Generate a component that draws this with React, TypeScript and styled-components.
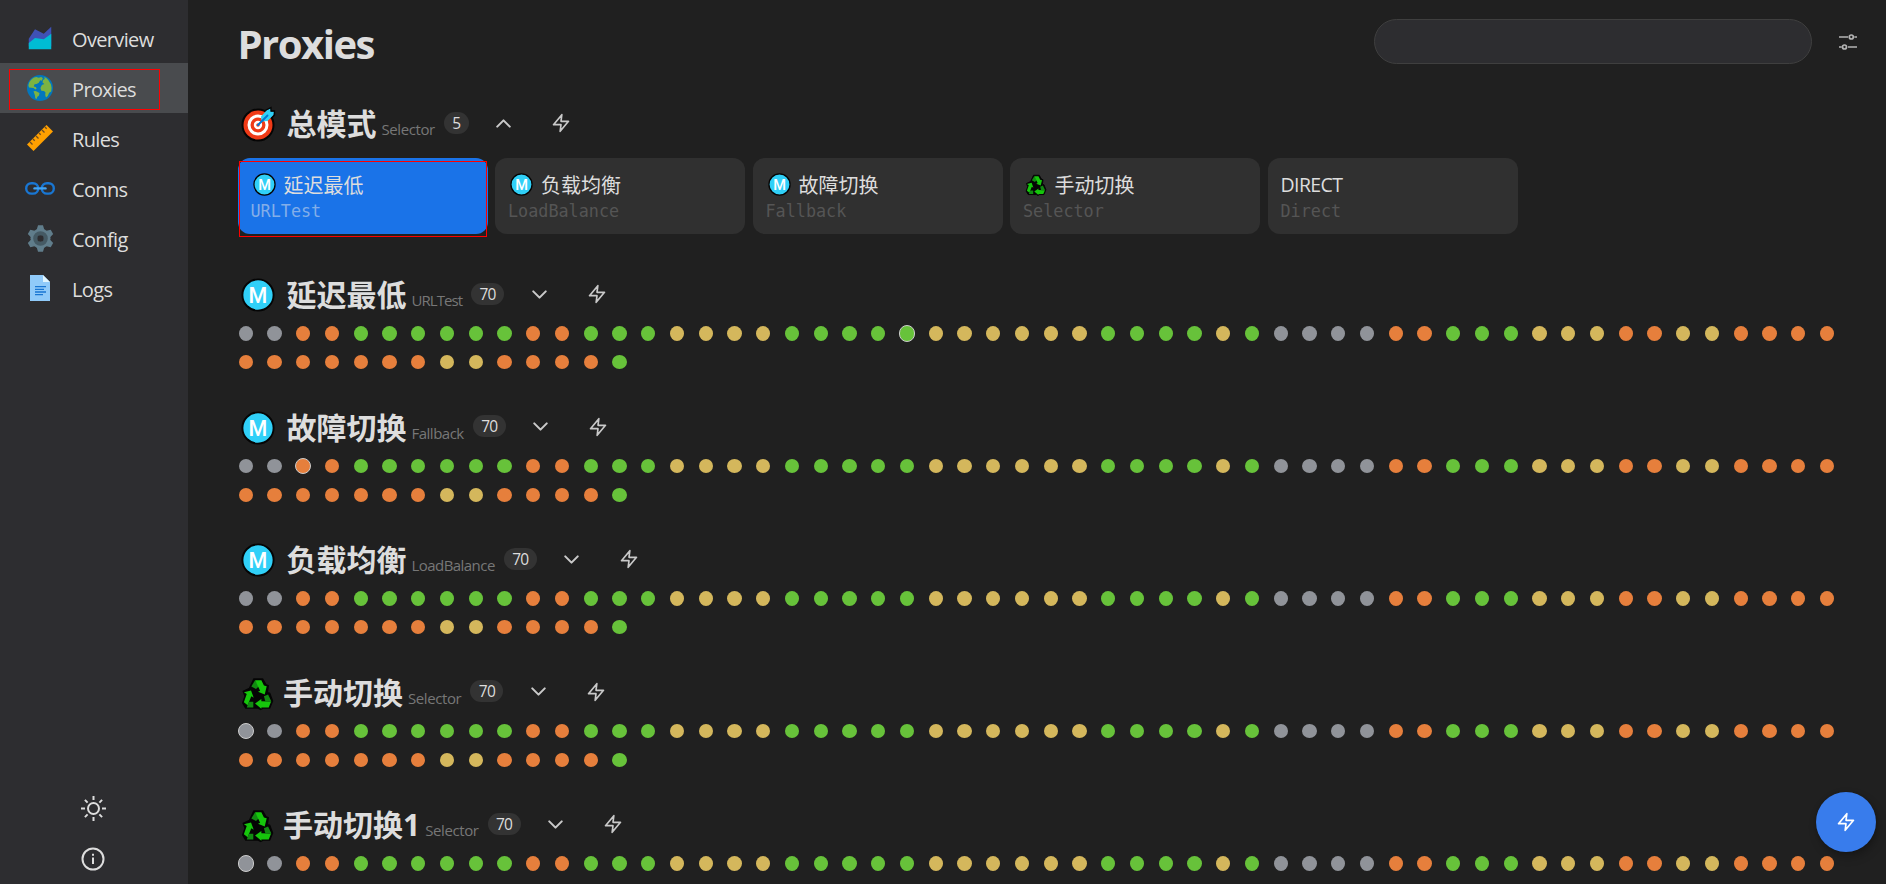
import React from 'react';
import styled, { createGlobalStyle, css } from 'styled-components';

const GlobalStyle = createGlobalStyle`
  * { box-sizing: border-box; }
  html, body { margin: 0; padding: 0; height: 100%; background: #202020; overflow: hidden; }
  body { font-family: "Open Sans", "Noto Sans CJK SC", sans-serif; color: #ddd; }
  svg { display: block; flex: none; overflow: visible; }
`;

const Layout = styled.div`
  display: flex;
  height: 884px;
  overflow: hidden;
`;

const Sidebar = styled.nav`
  width: 187.5px;
  flex: none;
  display: flex;
  flex-direction: column;
  justify-content: space-between;
  background: #2d2d30;
  padding: 13px 0 0;
`;

const NavItem = styled.div<{ $active?: boolean }>`
  position: relative;
  display: flex;
  align-items: center;
  height: 50px;
  padding-left: 25px;
  background: ${(p) => (p.$active ? '#494b4e' : 'transparent')};
`;

const NavIcon = styled.div`
  width: 30px;
  display: flex;
  justify-content: center;
`;

const NavLabel = styled.span`
  margin-left: 17px;
  font-size: 20px;
  line-height: 28px;
  letter-spacing: -0.65px;
  padding-top: 3px;
`;

const Marker = styled.div<{ $top: number; $left: number; $width: number; $height: number }>`
  position: absolute;
  top: ${(p) => p.$top}px;
  left: ${(p) => p.$left}px;
  width: ${(p) => p.$width}px;
  height: ${(p) => p.$height}px;
  border: 1px solid #f00;
  pointer-events: none;
`;

const SideFooter = styled.div`
  display: flex;
  flex-direction: column;
  align-items: center;
  padding: 0 1px 0.5px 0;
`;

const FooterButton = styled.div`
  height: 50px;
  display: flex;
  align-items: center;
`;

const Main = styled.main`
  flex: 1;
  min-width: 0;
  padding-left: 50px;
`;

const TopBar = styled.header`
  display: flex;
  align-items: center;
  justify-content: space-between;
  height: 84px;
  padding-right: 28px;
`;

const PageTitle = styled.h1`
  margin: 3px 0 0;
  font-size: 40px;
  line-height: 50px;
  font-weight: 700;
  letter-spacing: -1.5px;
`;

const TopRight = styled.div`
  display: flex;
  align-items: center;
  gap: 26px;
`;

const SearchInput = styled.input`
  width: 438px;
  height: 45px;
  margin-top: -1.5px;
  border: 1px solid #3f3f3f;
  border-radius: 23px;
  background: #2d2d30;
  color: #ddd;
  outline: none;
  padding: 0 18px;
`;

const Group = styled.section<{ $open?: boolean }>`
  padding-top: ${(p) => (p.$open ? 20 : 0)}px;
  margin-bottom: ${(p) => (p.$open ? 41.25 : 37.5)}px;
`;

const GroupHeader = styled.div`
  display: flex;
  align-items: center;
  height: 40px;
`;

const GroupIcon = styled.div<{ $gap: number }>`
  width: 34px;
  margin-left: 3px;
  margin-right: ${(p) => p.$gap}px;
`;

const GroupName = styled.h2`
  margin: 0;
  font-size: 30px;
  line-height: 40px;
  font-weight: 700;
  white-space: nowrap;
`;

const GroupType = styled.span<{ $tracking: number }>`
  margin-left: 5px;
  padding-top: 10px;
  font-size: 15px;
  line-height: 20px;
  letter-spacing: ${(p) => p.$tracking}px;
  color: #777;
`;

const Count = styled.span`
  margin: -3px 0 0 9px;
  height: 22px;
  padding: 0 8.4px;
  border-radius: 11px;
  background: #333;
  font-size: 15.5px;
  line-height: 22px;
  letter-spacing: -0.7px;
`;

const HeaderButton = styled.span<{ $gap: number }>`
  margin: -2px 0 0 ${(p) => p.$gap}px;
  color: #c9c9c9;
`;

const Cards = styled.div`
  position: relative;
  display: flex;
  gap: 7.5px;
  margin-top: 14px;
`;

const Card = styled.div<{ $now?: boolean }>`
  width: 250px;
  height: 76px;
  border-radius: 12px;
  padding: 14px 13px 0;
  background: ${(p) => (p.$now ? '#1a73e8' : '#303030')};
`;

const CardName = styled.div`
  display: flex;
  align-items: center;
  height: 25px;
  font-size: 20px;
  white-space: nowrap;
`;

const CardIcon = styled.div`
  margin: 0 8px 0 2px;
`;

const LatinName = styled.span`
  font-size: 19.5px;
  letter-spacing: -0.6px;
`;

const CardType = styled.div<{ $now?: boolean }>`
  font-family: "DejaVu Sans Mono", monospace;
  font-size: 16.8px;
  line-height: 28px;
  ${(p) => (p.$now ? css`color: #83aee9;` : css`color: #555;`)}
`;

const Dots = styled.div`
  display: grid;
  grid-template-columns: repeat(56, 16.25px);
  gap: 12.5px;
  margin-top: 10px;
`;

const Dot = styled.div<{ $color: string; $now?: boolean }>`
  width: 16.25px;
  height: 16.25px;
  border-radius: 50%;
  border: 1px solid ${(p) => (p.$now ? '#ccc' : 'transparent')};
  background: ${(p) => p.$color};
  background-clip: ${(p) => (p.$now ? 'border-box' : 'padding-box')};
`;

const Fab = styled.button`
  position: fixed;
  right: 10px;
  bottom: 32px;
  width: 60px;
  height: 60px;
  border: none;
  border-radius: 50%;
  padding: 0;
  display: flex;
  align-items: center;
  justify-content: center;
  background: #387cec;
  color: #fff;
  box-shadow: 0 0 5px rgba(0, 0, 0, 0.2), 2px 5px 10px rgba(0, 0, 0, 0.25);
`;

const Zap = () => (
  <svg width="20" height="20" viewBox="0 0 24 24" fill="none" stroke="currentColor" strokeWidth="2" strokeLinecap="round" strokeLinejoin="round">
    <polygon points="13 2 3 14 12 14 11 22 21 10 12 10 13 2" />
  </svg>
);

const Chevron = ({ up }: { up?: boolean }) => (
  <svg width="25" height="25" viewBox="0 0 24 24" fill="none" stroke="currentColor" strokeWidth="2" strokeLinecap="round" strokeLinejoin="round">
    <polyline points={up ? '18 15 12 9 6 15' : '6 9 12 15 18 9'} />
  </svg>
);

const Sliders = () => (
  <svg width="20" height="20" viewBox="0 0 20 20" fill="none" stroke="#b4b4b4" strokeWidth="1.7">
    <path d="M1 5h9M16.3 5H19M1 15h2.7M10 15h9" />
    <circle cx="13.3" cy="5" r="2" />
    <circle cx="6.5" cy="15" r="2" />
  </svg>
);

const Sun = () => (
  <svg width="25" height="25" viewBox="0 0 25 25" fill="none" stroke="#ddd" strokeWidth="2">
    <circle cx="12.5" cy="12.5" r="5.5" />
    <path d="M12.5 0v4M12.5 21v4M0 12.5h4M21 12.5h4M3.9 3.9l2.7 2.7M18.4 18.4l2.7 2.7M3.9 21.1l2.7-2.7M18.4 6.6l2.7-2.7" />
  </svg>
);

const Info = () => (
  <svg width="24" height="24" viewBox="0 0 24 24" fill="none" stroke="#ddd" strokeWidth="2">
    <circle cx="12" cy="12" r="10.5" />
    <path d="M12 10.5v6.5M12 6.8v2" />
  </svg>
);

const AreaChart = () => (
  <svg width="30" height="30" viewBox="0 0 48 48">
    <polygon fill="#3f51b5" points="42 37 6 37 6 25 16 10 30 17 42 6" />
    <polygon fill="#00bcd4" points="42 42 6 42 6 32 16 24 30 26 42 17" />
  </svg>
);

const Globe = () => (
  <svg width="26" height="26" viewBox="0 0 26 26">
    <circle cx="13" cy="13" r="13" fill="#0277bd" />
    <path
      fill="#7cb342"
      d="M7 2.6l2.5-.6 2 .8 2.8-.9 1.6 1.4-1.2 2.4-1.5-.4-1.4 2.5-2.2 1.1-2 .4-.9 2.2 2 .4 1 1.6-1.4.9-1.8-1.4-2.2-.3L2 12.4l-.6-2.1C2 6.8 4 4.2 7 2.6zM6.500 16.200l2.200-.2 3.800 2-.5 2.600-1.800 1.300-.5 2.200-1.400-.8-.4-3zM17.300 2l2 .9 2 2L24 9.500l.6 3.500-.4 3.500-2 1.300-1.500 3.200-1.700 1.600-.8-2.500.3-2.600-1.500-1.600-2.700-.2-.9-2.700 1.500-3 2.400-1-1.800-1.400.5-2.500 1.700-1.200z"
    />
  </svg>
);

const Ruler = () => (
  <svg width="28" height="28" viewBox="0 0 28 28">
    <polygon fill="#ffa000" points="1 20.5 20.5 1 27 7.5 7.5 27" />
    <path d="M4 18l2.5 2.5M7 15l1.7 1.7M10 12l2.5 2.5M13 9l1.7 1.7M16 6l2.5 2.5M19 3l1.7 1.7" stroke="#6d4c20" strokeWidth="1.3" />
  </svg>
);

const Link = () => (
  <svg width="30" height="13" viewBox="0 0 30 13" fill="none" stroke="#1976d2" strokeWidth="2.4">
    <rect x="1.2" y="1.2" width="12" height="10.4" rx="5.2" />
    <rect x="16.8" y="1.2" width="12" height="10.4" rx="5.2" />
    <path d="M9.500 6.4h11" stroke="#42a5f5" strokeLinecap="round" />
  </svg>
);

const Gear = () => (
  <svg width="27" height="27" viewBox="-13.5 -13.5 27 27">
    <g fill="#607d8b">
      {[0, 60, 120].map((a) => (
        <polygon key={a} transform={`rotate(${a})`} points="-2.5 -13.2 2.5 -13.2 4 -8 4 8 2.5 13.2 -2.5 13.2 -4 8 -4 -8" />
      ))}
      <circle r="10" />
    </g>
    <circle r="5.2" fill="#607d8b" stroke="#455a64" strokeWidth="4.2" />
    <circle r="3.2" fill="#2d2d30" />
  </svg>
);

const Doc = () => (
  <svg width="20" height="26" viewBox="0 0 20 26">
    <polygon fill="#90caf9" points="0 0 13 0 20 7 20 26 0 26" />
    <polygon fill="#e1f5fe" points="13 0 20 7 13 7" />
    <path d="M5 11.7h11M5 14.3h9M5 17h11M5 19.6h8" stroke="#1976d2" strokeWidth="1.3" />
  </svg>
);

const MBadge = ({ size }: { size: number }) => (
  <svg width={size} height={size} viewBox="0 0 34 34">
    <circle cx="17" cy="17" r="15.6" fill="#30d0f8" stroke="#050505" strokeWidth="1.9" />
    <text x="17" y="24.8" textAnchor="middle" fill="#fff" fontFamily="Roboto, sans-serif" fontWeight="500" fontSize="21.5">
      M
    </text>
  </svg>
);

const Recycle = ({ size }: { size: number }) => (
  <svg width={size} height={size} viewBox="0 0 34 34">
    <path
      d="M13.5 2h9l3.5 6 2.500 1-1 7.500 2.500.5L33 25l-3 7.500h-7L20.500 34 18 32.500H5L1.800 27l2.500-7-2-5 6.500-3z"
      fill="#050505"
      stroke="#050505"
      strokeLinejoin="round"
      strokeWidth="1.5"
    />
    <path d="M14.700 3.500l-3.900 6.500 4.900 2.600 3-3z" fill="#128a12" />
    <path d="M14.700 3.500h6.600L24 9l2.900.8-2.100 8.400-7-2.800 2.200-1.100z" fill="#16c60c" />
    <path d="M3.100 16l7.400-2 2.800 7.600-2.500-1.400L7 29.500l-4-3 3-8.700z" fill="#16c60c" />
    <path d="M8.300 26h4.600v5.800H6z" fill="#128a12" />
    <path d="M14.700 27.600l6.600-4.600v2.300l10.200.2-2.500 6.300h-7.700v1.400z" fill="#16c60c" />
    <path d="M24 20.200l4.300-2 3.500 7.300h-6.300z" fill="#128a12" />
  </svg>
);

const Target = ({ size }: { size: number }) => (
  <svg width={size} height={size} viewBox="0 0 34 34">
    <circle cx="17" cy="18" r="15.5" fill="#f03a17" stroke="#050505" strokeWidth="2" />
    <circle cx="17" cy="18" r="9" fill="none" stroke="#fff" strokeWidth="3" />
    <circle cx="17" cy="18" r="3" fill="#f03a17" stroke="#fff" strokeWidth="2.4" />
    <path d="M20.500 14.500l-.5-5 6-6.500 3.500-1.500.5 3h3l-.5 3.500-6 6z" fill="#30d0f8" />
    <path d="M24 3.500l6-3V4h3.500V8L30 12" fill="none" stroke="#050505" strokeWidth="1.3" />
    <path d="M17 18l9.500-9.500" stroke="#0078d4" strokeWidth="1.9" strokeLinecap="round" />
  </svg>
);

type IconKind = 'm' | 'recycle' | 'target';
const Emoji = ({ kind, size }: { kind: IconKind; size: number }) => {
  if (kind === 'm') return <MBadge size={size} />;
  if (kind === 'recycle') return <Recycle size={size} />;
  return <Target size={size} />;
};

const COLORS: Record<string, string> = { n: '#909399', o: '#e67f3c', g: '#67c23a', y: '#d4b75c' };

const LATENCIES = (
  'nnooggggggoogggyyyygggggyyyyyyggggygnnnnoogggyyyooyyoooo' + 'oooooooyyoooog'
).split('');

const TRACKING: Record<string, number> = { URLTest: -0.95, Fallback: -0.5, LoadBalance: -0.55, Selector: -0.4 };

const NAV = [
  { label: 'Overview', icon: <AreaChart /> },
  { label: 'Proxies', icon: <Globe />, active: true },
  { label: 'Rules', icon: <Ruler /> },
  { label: 'Conns', icon: <Link /> },
  { label: 'Config', icon: <Gear /> },
  { label: 'Logs', icon: <Doc /> },
];

const MODES: { icon?: IconKind; name: string; type: string; now?: boolean }[] = [
  { icon: 'm', name: '延迟最低', type: 'URLTest', now: true },
  { icon: 'm', name: '负载均衡', type: 'LoadBalance' },
  { icon: 'm', name: '故障切换', type: 'Fallback' },
  { icon: 'recycle', name: '手动切换', type: 'Selector' },
  { name: 'DIRECT', type: 'Direct' },
];

const GROUPS: { icon: IconKind; name: string; type: string; now?: number }[] = [
  { icon: 'm', name: '延迟最低', type: 'URLTest', now: 23 },
  { icon: 'm', name: '故障切换', type: 'Fallback', now: 2 },
  { icon: 'm', name: '负载均衡', type: 'LoadBalance' },
  { icon: 'recycle', name: '手动切换', type: 'Selector', now: 0 },
  { icon: 'recycle', name: '手动切换1', type: 'Selector', now: 0 },
];

const Header = (p: { icon: IconKind; name: string; type: string; count: number; open?: boolean }) => (
  <GroupHeader>
    <GroupIcon $gap={p.icon === 'recycle' ? 8.5 : 12}>
      <Emoji kind={p.icon} size={p.icon === 'recycle' ? 32.5 : 34} />
    </GroupIcon>
    <GroupName>{p.name}</GroupName>
    <GroupType $tracking={TRACKING[p.type]}>{p.type}</GroupType>
    <Count>{p.count}</Count>
    <HeaderButton $gap={22.5}>
      <Chevron up={p.open} />
    </HeaderButton>
    <HeaderButton $gap={35}>
      <Zap />
    </HeaderButton>
  </GroupHeader>
);

export default function App() {
  return (
    <>
      <GlobalStyle />
      <Layout>
        <Sidebar>
          <div>
            {NAV.map((n) => (
              <NavItem key={n.label} $active={n.active}>
                <NavIcon>{n.icon}</NavIcon>
                <NavLabel>{n.label}</NavLabel>
                {n.active && <Marker $top={6} $left={9} $width={151} $height={41} />}
              </NavItem>
            ))}
          </div>
          <SideFooter>
            <FooterButton>
              <Sun />
            </FooterButton>
            <FooterButton>
              <Info />
            </FooterButton>
          </SideFooter>
        </Sidebar>
        <Main>
          <TopBar>
            <PageTitle>Proxies</PageTitle>
            <TopRight>
              <SearchInput type="text" />
              <Sliders />
            </TopRight>
          </TopBar>
          <Group $open>
            <Header icon="target" name="总模式" type="Selector" count={5} open />
            <Cards>
              {MODES.map((m) => (
                <Card key={m.name} $now={m.now}>
                  <CardName>
                    {m.icon && (
                      <CardIcon>
                        <Emoji kind={m.icon} size={m.icon === 'recycle' ? 21.5 : 23} />
                      </CardIcon>
                    )}
                    {m.icon ? m.name : <LatinName>{m.name}</LatinName>}
                  </CardName>
                  <CardType $now={m.now}>{m.type}</CardType>
                </Card>
              ))}
              <Marker $top={3} $left={1} $width={248} $height={76} />
            </Cards>
          </Group>
          {GROUPS.map((g) => (
            <Group key={g.name}>
              <Header icon={g.icon} name={g.name} type={g.type} count={70} />
              <Dots>
                {LATENCIES.map((c, i) => (
                  <Dot key={i} $color={COLORS[c]} $now={i === g.now} />
                ))}
              </Dots>
            </Group>
          ))}
        </Main>
      </Layout>
      <Fab>
        <Zap />
      </Fab>
    </>
  );
}
